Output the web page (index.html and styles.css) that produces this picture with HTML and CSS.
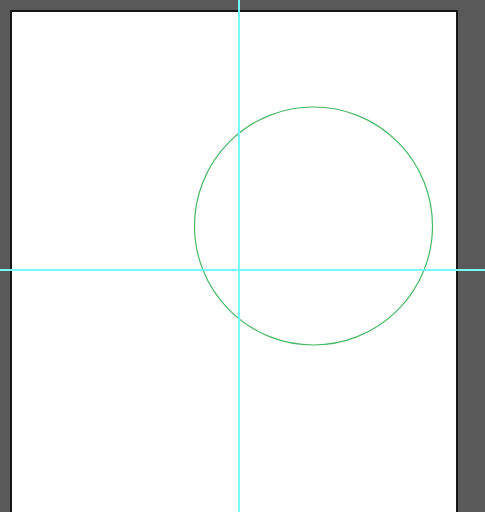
FILE: index.html
```
<!DOCTYPE html>
<html>
<head>
<meta charset="utf-8">
<link rel="stylesheet" href="styles.css">
</head>
<body>
<div class="canvas">
  <div class="page">
    <svg class="art" width="444" height="510" viewBox="0 0 444 510">
      <circle cx="301.5" cy="214" r="119" fill="none" stroke="#47b864" stroke-width="1.2"/>
    </svg>
  </div>
  <div class="guide guide-v"></div>
  <div class="guide guide-h"></div>
</div>
</body>
</html>
```
FILE: styles.css
```
html, body {
  margin: 0;
  padding: 0;
  width: 485px;
  height: 512px;
  overflow: hidden;
  background: #595959;
}
.canvas {
  position: relative;
  width: 485px;
  height: 512px;
  padding: 10px 0 0 10px;
  box-sizing: border-box;
}
.page {
  width: 444px;
  height: 520px;
  background: #ffffff;
  border: 2px solid #161616;
  border-bottom: none;
}
.art {
  display: block;
}
.guide {
  position: absolute;
  background: #75fbfb;
}
.guide-v {
  left: 238px;
  top: 0;
  width: 2px;
  height: 512px;
}
.guide-h {
  left: 0;
  top: 269px;
  width: 485px;
  height: 2px;
}
```
